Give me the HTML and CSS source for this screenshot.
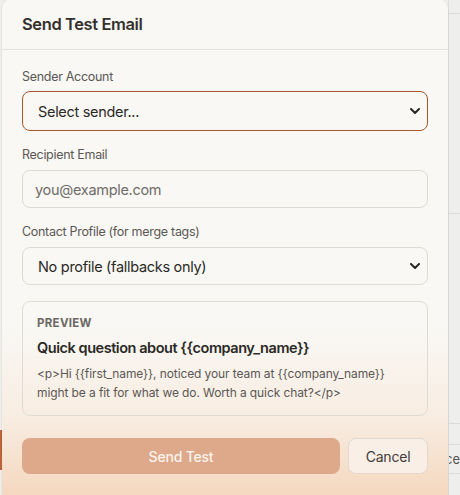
FILE: index.html
```html
<!doctype html>
<html lang="en">
<head>
    <meta charset="UTF-8">
    <meta name="viewport" content="width=device-width, initial-scale=1.0">
    <title>Send Test Email</title>
    <link rel="stylesheet" href="styles.css">
</head>
<body>
<!-- page underneath the dialog -->
<div class="backdrop">
    <div class="backdrop-col">
        <div class="bd-row" style="height:14px"></div>
        <div class="bd-row" style="height:200px"></div>
        <div class="bd-row" style="height:210px"></div>
        <div class="bd-row" style="height:21px"></div>
        <div class="bd-row bd-text" style="height:29px">nce</div>
        <div class="bd-row"></div>
    </div>
    <div class="backdrop-mark"></div>
</div>

<div class="modal">
    <div class="modal-header">
        <h2 class="modal-title">Send Test Email</h2>
    </div>
    <form class="modal-body" action="">
        <div class="field">
            <label class="field-label" for="sender">Sender Account</label>
            <select id="sender" class="control control-select is-focus">
                <option>Select sender...</option>
            </select>
        </div>
        <div class="field">
            <label class="field-label" for="recipient">Recipient Email</label>
            <input type="email" id="recipient" class="control control-input" placeholder="you@example.com">
        </div>
        <div class="field">
            <label class="field-label" for="profile">Contact Profile (for merge tags)</label>
            <select id="profile" class="control control-select">
                <option>No profile (fallbacks only)</option>
            </select>
        </div>
        <div class="preview">
            <div class="preview-label">Preview</div>
            <div class="preview-subject">Quick question about {{company_name}}</div>
            <p class="preview-body">&lt;p&gt;Hi {{first_name}}, noticed your team at {{company_name}} might be a fit for what we do. Worth a quick chat?&lt;/p&gt;</p>
        </div>
        <div class="modal-actions">
            <button type="submit" class="btn btn-primary" disabled>Send Test</button>
            <button type="button" class="btn btn-ghost">Cancel</button>
        </div>
    </form>
</div>
</body>
</html>
```

FILE: styles.css
```css
/*reset*/
body, h1, h2, h3, p, ul, li, form, button, input, select {
    margin: 0;
    padding: 0;
}
* {
    box-sizing: border-box;
}
body {
    width: 460px;
    height: 495px;
    overflow: hidden;
    position: relative;
    background-color: #eeeeec;
    font-family: Inter, "Open Sans", "Noto Sans", sans-serif;
    color: #2d2a27;
}
/*/reset*/

/* page behind the dialog */
.backdrop {
    position: absolute;
    inset: 0;
}
.backdrop-col {
    position: absolute;
    top: 0;
    right: 0;
    width: 12px;
    height: 100%;
    border-left: 1px solid #e0dfdc;
    display: flex;
    flex-direction: column;
}
.bd-row {
    border-bottom: 1px solid #dcdbd8;
    flex-shrink: 0;
}
.bd-row:last-child {
    flex: 1;
    border-bottom: none;
}
.bd-text {
    font-size: 13px;
    line-height: 28px;
    color: #55524e;
    overflow: hidden;
    white-space: nowrap;
    direction: rtl;
}
.backdrop-mark {
    position: absolute;
    left: 0;
    top: 430px;
    width: 2px;
    height: 40px;
    background-color: #c0633a;
}

/* dialog */
.modal {
    position: relative;
    width: 446px;
    height: 497px;
    margin: -2px 0 0 2px;
    border-radius: 12px 12px 0 0;
    background: linear-gradient(180deg, #f9f8f4 0%, #f9f8f4 66%, #f8ede2 84%, #f4d8bf 100%);
    box-shadow: 0 0 0 1px rgba(0, 0, 0, .04);
}
.modal-header {
    height: 52px;
    padding: 0 20px;
    display: flex;
    align-items: center;
    border-bottom: 1px solid #e3e1dc;
}
.modal-title {
    font-size: 16.5px;
    font-weight: 600;
    color: #34302d;
    letter-spacing: -0.4px;
}
.modal-body {
    padding: 19px 20px 0;
    display: flex;
    flex-direction: column;
    gap: 16px;
}

.field {
    display: flex;
    flex-direction: column;
    gap: 7px;
}
.field-label {
    font-size: 12.5px;
    line-height: 16px;
    color: #5a5754;
    letter-spacing: -0.3px;
}
.control {
    width: 100%;
    height: 38px;
    border: 1px solid #dedbd5;
    border-radius: 8px;
    background-color: #f9f8f4;
    font-family: inherit;
    font-size: 14.5px;
    color: #2b2926;
    letter-spacing: -0.3px;
    outline: none;
}
.control-input {
    padding: 0 12px;
}
.control-input::placeholder {
    color: #6f6c68;
}
.control-select {
    appearance: none;
    -webkit-appearance: none;
    padding: 0 30px 0 15px;
    background-image: url("data:image/svg+xml,%3Csvg xmlns='http://www.w3.org/2000/svg' width='10' height='6' viewBox='0 0 10 6'%3E%3Cpath d='M1 1l4 4 4-4' fill='none' stroke='%232b2926' stroke-width='2' stroke-linecap='round' stroke-linejoin='round'/%3E%3C/svg%3E");
    background-repeat: no-repeat;
    background-position: right 7px center;
}
.control-select.is-focus {
    height: 40px;
    margin-top: -1px;
    border: 1.5px solid #a9552c;
}

.preview {
    border: 1px solid #e0dcd5;
    border-radius: 8px;
    padding: 14px 14px 13px;
}
.preview-label {
    font-size: 11.5px;
    line-height: 15px;
    font-weight: 700;
    letter-spacing: 0.3px;
    text-transform: uppercase;
    color: #6b6864;
}
.preview-subject {
    margin-top: 7px;
    font-size: 14.5px;
    line-height: 20px;
    font-weight: 600;
    color: #2b2926;
    letter-spacing: -0.45px;
}
.preview-body {
    margin-top: 6px;
    font-size: 12px;
    line-height: 19px;
    color: #5a5754;
    letter-spacing: -0.1px;
}

.modal-actions {
    margin-top: 6px;
    display: flex;
    gap: 8px;
}
.btn {
    height: 36px;
    border-radius: 8px;
    font-family: inherit;
    font-size: 14px;
    letter-spacing: -0.2px;
    cursor: pointer;
}
.btn-primary {
    flex: 1;
    border: none;
    background-color: #dda98a;
    color: #fcf3ec;
    font-weight: 500;
}
.btn-ghost {
    width: 80px;
    border: 1px solid #e2d8cf;
    background-color: #f9efe6;
    color: #3f3c39;
}
```
